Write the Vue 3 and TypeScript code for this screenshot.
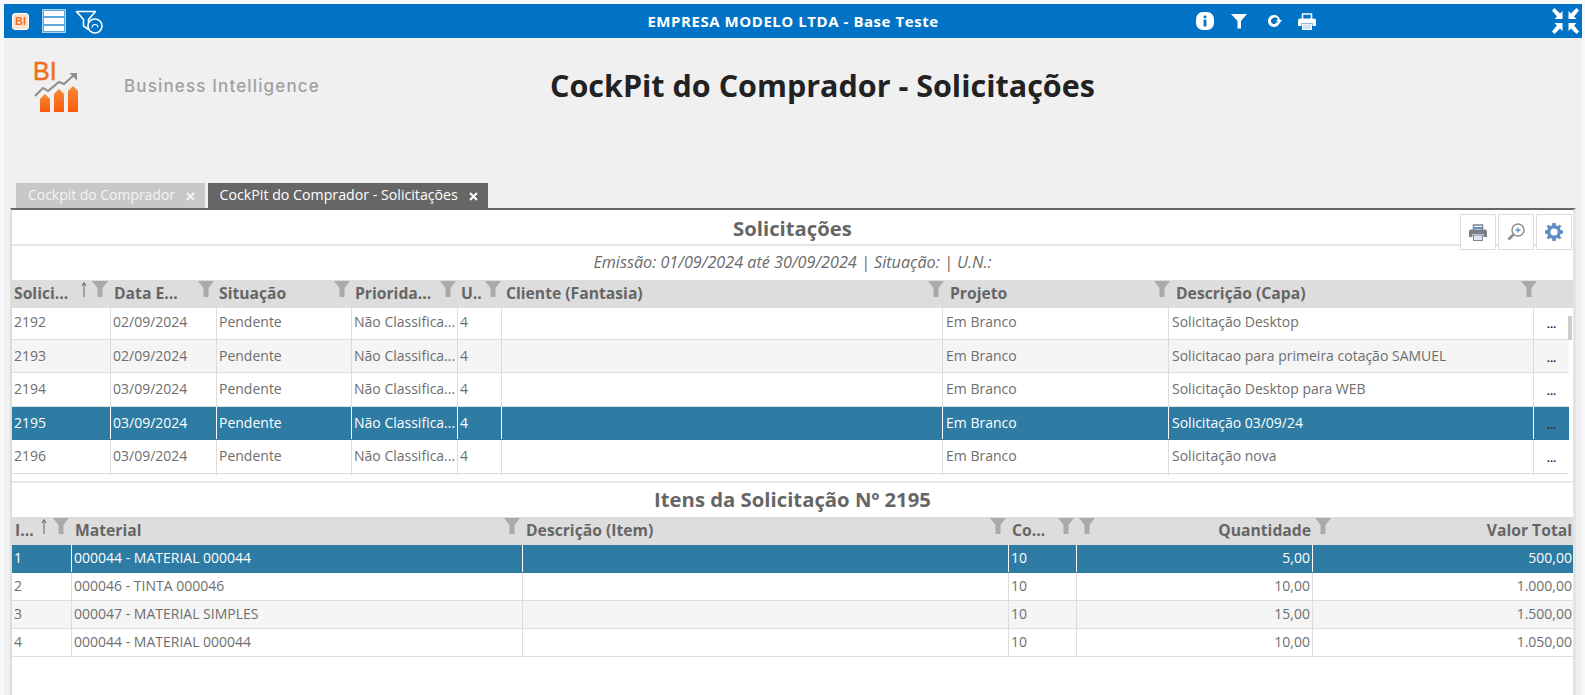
<script setup lang="ts">
interface SolRow { id: string; date: string; desc: string; selected?: boolean }
interface ItemRow { id: string; material: string; qty: string; total: string; selected?: boolean }

const solRows: SolRow[] = [
  { id: '2192', date: '02/09/2024', desc: 'Solicitação Desktop' },
  { id: '2193', date: '02/09/2024', desc: 'Solicitacao para primeira cotação SAMUEL' },
  { id: '2194', date: '03/09/2024', desc: 'Solicitação Desktop para WEB' },
  { id: '2195', date: '03/09/2024', desc: 'Solicitação 03/09/24', selected: true },
  { id: '2196', date: '03/09/2024', desc: 'Solicitação nova' },
]
const itemRows: ItemRow[] = [
  { id: '1', material: '000044 - MATERIAL 000044', qty: '5,00', total: '500,00', selected: true },
  { id: '2', material: '000046 - TINTA 000046', qty: '10,00', total: '1.000,00' },
  { id: '3', material: '000047 - MATERIAL SIMPLES', qty: '15,00', total: '1.500,00' },
  { id: '4', material: '000044 - MATERIAL 000044', qty: '10,00', total: '1.050,00' },
]
const solHead = ['Solici...', 'Data E...', 'Situação', 'Priorida...', 'U..', 'Cliente (Fantasia)', 'Projeto', 'Descrição (Capa)', '']
</script>

<template>
  <div class="app">
    <header class="topbar">
      <div class="top-left">
        <span class="bi-badge">BI</span>
        <span class="list-btn"><i></i><i></i><i></i></span>
        <svg class="filter-clock" width="28" height="24" viewBox="0 0 28 24" fill="none">
          <path d="M1.5 1.5H20.5L13.5 9.5V19.5L8.5 16V9.5Z" stroke="#fff" stroke-width="1.6" stroke-linejoin="round" fill="#0073c6"/>
          <circle cx="20" cy="16" r="7" fill="#0073c6" stroke="#fff" stroke-width="1.6"/>
          <path d="M17 17.5A3 3 0 0 1 23 17.5" stroke="#fff" stroke-width="1.1"/>
        </svg>
      </div>
      <div class="top-title">EMPRESA MODELO LTDA - Base Teste</div>
      <div class="top-right">
        <svg class="ti-info" width="18" height="18" viewBox="0 0 18 18"><rect width="18" height="18" rx="7" fill="#fff"/><rect x="7.6" y="3.5" width="2.8" height="2.8" rx="1" fill="#0073c6"/><rect x="7.6" y="7.5" width="2.8" height="7" fill="#0073c6"/></svg>
        <svg class="ti-filter" width="16" height="16" viewBox="0 0 16 16"><path d="M0 1H16L10 8V15.5H6.5V8Z" fill="#fff"/></svg>
        <svg class="ti-refresh" width="15" height="14" viewBox="0 0 15 14"><path d="M7 1A6 6 0 1 0 12.6 9L9.8 8A3 3 0 1 1 7 4Z" fill="#fff"/><path d="M6.5 3.5C9 3 10.5 4 11 6L9 6 12.4 9.5 15 6 13 6C12.6 3 10 1 7 1Z" fill="#fff"/></svg>
        <svg class="ti-print" width="18" height="17" viewBox="0 0 18 17"><path d="M4.5 6V1H13.5V6" fill="none" stroke="#fff" stroke-width="1.5"/><path d="M2 5.5H16A2 2 0 0 1 18 7.5V13H14.5V10H3.5V13H0V7.5A2 2 0 0 1 2 5.5Z" fill="#fff"/><rect x="4.5" y="11" width="9" height="5.5" fill="#cfe3f4" stroke="#fff"/></svg>
        <svg class="ti-compress" width="29" height="28" viewBox="0 0 29 28" fill="#fff">
          <path d="M1 3.5 3.5 1 9 6.5 11.5 4V12H3.5L6 9.5Z"/>
          <path d="M28 3.5 25.5 1 20 6.5 17.5 4V12H25.5L23 9.5Z"/>
          <path d="M1 24.5 3.5 27 9 21.5 11.5 24V16H3.5L6 18.5Z"/>
          <path d="M28 24.5 25.5 27 20 21.5 17.5 24V16H25.5L23 18.5Z"/>
        </svg>
      </div>
    </header>

    <main class="content">
      <section class="brand">
        <svg class="logo" width="52" height="56" viewBox="0 0 52 56">
          <defs><linearGradient id="barg" x1="0" y1="0" x2="0" y2="1"><stop offset="0" stop-color="#f58a3c"/><stop offset="1" stop-color="#fb5a08"/></linearGradient></defs>
          <text x="3" y="23" font-family="Liberation Sans, sans-serif" font-size="25" fill="#f0701f" stroke="#f0701f" stroke-width="0.5">BI</text>
          <path d="M5 39 13 31 18 34 29 25 34 27 44 18" fill="none" stroke="#8e8e8e" stroke-width="2"/>
          <path d="M39.5 16H47V23.5Z" fill="#8e8e8e"/>
          <path d="M10 55V42L15 37 20 42V55Z" fill="url(#barg)"/>
          <path d="M24 55V37L29 32 34 37V55Z" fill="url(#barg)"/>
          <path d="M38 55V34L43 29 48 34V55Z" fill="url(#barg)"/>
        </svg>
        <span class="brand-name">Business Intelligence</span>
        <h1 class="page-title">CockPit do Comprador - Solicitações</h1>
      </section>

      <nav class="tabs">
        <div class="tab">Cockpit do Comprador
          <svg class="close" width="9" height="9" viewBox="0 0 9 9"><path d="M1 1 8 8M8 1 1 8" stroke="currentColor" stroke-width="2"/></svg>
        </div>
        <div class="tab active">CockPit do Comprador - Solicitações
          <svg class="close" width="9" height="9" viewBox="0 0 9 9"><path d="M1 1 8 8M8 1 1 8" stroke="currentColor" stroke-width="2"/></svg>
        </div>
      </nav>

      <section class="panel">
        <div class="tools">
          <button class="tool" type="button">
            <svg width="18" height="17" viewBox="0 0 18 17"><path d="M4.5 6V1H13.5V6" fill="none" stroke="#7b8794" stroke-width="1.5"/><path d="M2 5.5H16A2 2 0 0 1 18 7.5V13H14.5V10H3.5V13H0V7.5A2 2 0 0 1 2 5.5Z" fill="#7b7f84"/><rect x="4.5" y="11" width="9" height="5.5" fill="#dbe7f2" stroke="#7b8794"/><rect x="5" y="3" width="8" height="2" fill="#5d93c9"/></svg>
          </button>
          <button class="tool" type="button">
            <svg width="18" height="18" viewBox="0 0 18 18" fill="none"><circle cx="11" cy="7" r="6" stroke="#8a8f94" stroke-width="1.5"/><path d="M6.5 11.5 1.5 16.5" stroke="#8a8f94" stroke-width="2.6"/><path d="M8.5 7H13.5M11 4.5V9.5" stroke="#5d93c9" stroke-width="1.3"/></svg>
          </button>
          <button class="tool" type="button">
            <svg width="18" height="18" viewBox="0 0 18 18"><path d="M7.4 0H10.6L11 2.4 12.7 3.1 14.7 1.7 16.3 3.3 14.9 5.3 15.6 7 18 7.4V10.6L15.6 11 14.9 12.7 16.3 14.7 14.7 16.3 12.7 14.9 11 15.6 10.6 18H7.4L7 15.6 5.3 14.9 3.3 16.3 1.7 14.7 3.1 12.7 2.4 11 0 10.6V7.4L2.4 7 3.1 5.3 1.7 3.3 3.3 1.7 5.3 3.1 7 2.4Z" fill="#5d8fc4"/><circle cx="9" cy="9" r="3.6" fill="#fff"/></svg>
          </button>
        </div>

        <h2 class="sec-title first">Solicitações</h2>
        <p class="filter-line">Emissão: 01/09/2024 até 30/09/2024 | Situação: | U.N.:</p>

        <div class="row head head-a">
          <div v-for="(h, i) in solHead" :key="i" class="cell">{{ h }}</div>
          <svg class="sort sort-a" width="6" height="15" viewBox="0 0 6 15"><path d="M3 15V1M1 4 3 0.5 5 4" fill="none" stroke="#666" stroke-width="1"/></svg>
          <svg v-for="x in [80, 186, 322, 428, 473, 916, 1142, 1509]" :key="x" class="funnel" :style="{ left: x + 'px' }" width="16" height="16" viewBox="0 0 16 16"><path d="M0 0H16L10.5 7V16H5.5V7Z"/></svg>
        </div>
        <div class="body-a">
          <div v-for="(r, i) in solRows" :key="r.id" class="row data grid-a wide" :class="{ sel: r.selected, alt: i % 2 === 1 }">
            <div class="cell">{{ r.id }}</div>
            <div class="cell">{{ r.date }}</div>
            <div class="cell">Pendente</div>
            <div class="cell">Não Classifica...</div>
            <div class="cell">4</div>
            <div class="cell"></div>
            <div class="cell">Em Branco</div>
            <div class="cell">{{ r.desc }}</div>
            <div class="cell more">...</div>
          </div>
          <div class="row tail grid-a wide"><div v-for="n in 8" :key="n" class="cell"></div></div>
          <span class="thumb"></span>
        </div>
        <div class="divider"></div>

        <h2 class="sec-title">Itens da Solicitação Nº 2195</h2>
        <div class="row head head-b grid-b">
          <div class="cell">I...</div>
          <div class="cell">Material</div>
          <div class="cell">Descrição (Item)</div>
          <div class="cell">Co...</div>
          <div class="cell num">Quantidade</div>
          <div class="cell num last">Valor Total</div>
          <svg class="sort sort-b" width="6" height="15" viewBox="0 0 6 15"><path d="M3 15V1M1 4 3 0.5 5 4" fill="none" stroke="#666" stroke-width="1"/></svg>
          <svg v-for="x in [41, 492, 978, 1046, 1067, 1303]" :key="x" class="funnel" :style="{ left: x + 'px' }" width="16" height="16" viewBox="0 0 16 16"><path d="M0 0H16L10.5 7V16H5.5V7Z"/></svg>
        </div>
        <div v-for="(r, i) in itemRows" :key="r.id" class="row data short grid-b" :class="{ sel: r.selected, alt: i === 2 }">
          <div class="cell">{{ r.id }}</div>
          <div class="cell">{{ r.material }}</div>
          <div class="cell"></div>
          <div class="cell">10</div>
          <div class="cell num">{{ r.qty }}</div>
          <div class="cell num last">{{ r.total }}</div>
        </div>
      </section>
    </main>
  </div>
</template>

<style>
html, body { margin: 0; padding: 0; background: #f7f8fa; overflow: hidden; }
</style>

<style scoped>
.app {
  height: 695px;
  box-sizing: border-box;
  padding: 4px 3px 0 4px;
  display: flex;
  flex-direction: column;
  font-family: "Open Sans", "Noto Sans", sans-serif;
  color: #6b6b6b;
  overflow: hidden;
}
.topbar {
  flex: none;
  height: 34px;
  background: #0073c6;
  display: grid;
  grid-template-columns: 1fr auto 1fr;
  align-items: center;
  color: #fff;
}
.top-left { display: flex; align-items: center; padding-left: 8px; }
.bi-badge {
  width: 17px;
  height: 17px;
  border-radius: 3px;
  background: #fde3cf;
  border: 1px solid #fff;
  box-sizing: border-box;
  color: #f0701f;
  font: 700 11px/15px "Liberation Sans", sans-serif;
  text-align: center;
}
.list-btn {
  margin-left: 13px;
  width: 24px;
  height: 24px;
  box-sizing: border-box;
  border: 1px solid #a9d0ee;
  background: #5da7dd;
  padding: 1px;
  display: flex;
  flex-direction: column;
  justify-content: space-between;
}
.list-btn i { display: block; height: 5.4px; background: #fff; }
.filter-clock { margin-left: 9px; margin-top: 2px; }
.top-title { font-size: 15px; font-weight: 700; letter-spacing: 0.55px; white-space: nowrap; }
.top-right { display: flex; align-items: center; padding-left: 257px; position: relative; height: 34px; }
.ti-filter { margin-left: 17px; }
.ti-refresh { margin-left: 20px; }
.ti-print { margin-left: 16px; }
.ti-compress { margin-left: auto; margin-right: 2px; }

.content { flex: 1; min-height: 0; background: #f0f0f0; display: flex; flex-direction: column; padding-right: 6px; }
.brand { flex: none; height: 145px; display: flex; align-items: flex-start; position: relative; }
.logo { margin: 19px 0 0 26px; }
.brand-name {
  margin: 38px 0 0 42px;
  font-family: "Inter", sans-serif;
  font-size: 17px;
  font-weight: 500;
  letter-spacing: 1.15px;
  color: #a0a0a0;
  width: 426px;
  white-space: nowrap;
}
.page-title { margin: 26px 0 0; font-size: 30.5px; line-height: 42px; font-weight: 700; color: #222; white-space: nowrap; }

.tabs { flex: none; height: 25px; display: flex; gap: 3px; padding-left: 12px; }
.tab { height: 25px; background: #c8c8c8; color: #f4f4f4; font-size: 13.95px; line-height: 24px; padding: 0 10px 0 12px; white-space: nowrap; }
.tab.active { background: #666; color: #fff; font-size: 14.2px; }
.close { margin-left: 7px; vertical-align: -1px; }

.panel {
  flex: 1;
  min-height: 0;
  margin-left: 6px;
  background: #fff;
  border-top: 2px solid #666;
  border-left: 2px solid #ddd;
  border-right: 3px solid #e4e4e4;
  position: relative;
  overflow: hidden;
}
.tools { position: absolute; left: 1448px; top: 4px; display: flex; gap: 2px; }
.tool {
  width: 36px;
  height: 36px;
  box-sizing: border-box;
  padding: 0;
  background: #fff;
  border: 1px solid #ddd;
  display: flex;
  align-items: center;
  justify-content: center;
}
.sec-title { margin: 0; height: 34px; box-sizing: border-box; padding-top: 0; font-size: 20.3px; line-height: 32px; font-weight: 700; text-align: center; color: #666; }
.sec-title.first { height: 36px; padding-top: 2px; border-bottom: 2px solid #e4e4e4; }
.filter-line { margin: 0; height: 34px; line-height: 32px; font-size: 16.2px; font-style: italic; text-align: center; color: #6b6b6b; }

.row { display: grid; position: relative; }
.grid-a { grid-template-columns: 99px 106px 135px 106px 44px 441px 226px 365px 35px; }
.head-a { grid-template-columns: 100px 105px 136px 106px 45px 444px 226px 365px 1fr; }
.grid-b { grid-template-columns: 60px 451px 486px 68px 236px 1fr; }
.cell { padding: 0 2px 0 2px; box-sizing: border-box; white-space: nowrap; overflow: hidden; border-right: 1px solid #ddd; }
.head { height: 28px; background: #ddd; font-size: 15.7px; font-weight: 700; color: #666; }
.head .cell { border-right: 0; line-height: 26px; padding-top: 0; }
.head-b .cell { padding-left: 3px; }
.head-b .last { padding-left: 2px; }
.data { height: 33.5px; font-size: 14px; line-height: 31px; color: #6e6e6e; border-bottom: 1px solid #ddd; box-sizing: border-box; }
.data:first-child { height: 31.5px; line-height: 27px; }
.data.short { height: 28px; line-height: 25px; width: 100%; }
.data .cell:nth-child(7), .data .cell:nth-child(8) { padding-left: 3px; }
.wide { width: 1557px; }
.alt { background: #f5f5f5; }
.sel { background: #2e7ba3; color: #fff; border-bottom-color: #2e7ba3; }
.sel .cell { border-right-color: #fff; }
.more { text-align: center; font-size: 11px; font-weight: 700; color: #222; padding: 2px 0 0; border-right: 0; }
.sel .more { color: #222; }
.num { text-align: right; }
.last { border-right: 0; padding-right: 1px; }
.funnel { position: absolute; top: 1px; fill: #aaa; }
.sort { position: absolute; top: 2px; }
.sort-a { left: 69px; }
.sort-b { left: 29px; }
.body-a { position: relative; height: 167px; overflow: hidden; }
.tail { height: 8px; }
.thumb { position: absolute; left: 1556px; top: 8px; width: 4px; height: 24px; background: #ccc; }
.divider { height: 1px; background: #e4e4e4; margin-top: 6px; border-bottom: 1px solid #eee; }
</style>
